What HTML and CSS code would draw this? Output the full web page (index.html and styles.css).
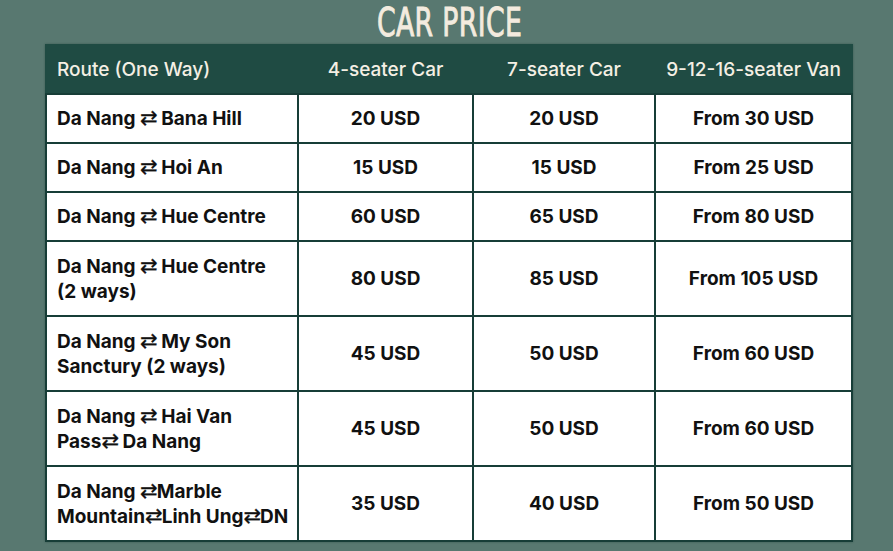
FILE: index.html
```html
<!DOCTYPE html>
<html>
<head>
<meta charset="utf-8">
<link rel="stylesheet" href="styles.css">
</head>
<body>
<div class="page">
  <h1 class="title"><span class="title-text">CAR PRICE</span></h1>
  <table class="prices">
    <colgroup>
      <col class="c1"><col class="c2"><col class="c3"><col class="c4">
    </colgroup>
    <thead>
      <tr>
        <th class="route">Route (One Way)</th>
        <th>4-seater Car</th>
        <th>7-seater Car</th>
        <th>9-12-16-seater Van</th>
      </tr>
    </thead>
    <tbody>
      <tr class="one">
        <td class="route">Da Nang <span class="arr">⇄</span> Bana Hill</td><td>20 USD</td><td>20 USD</td><td>From 30 USD</td>
      </tr>
      <tr class="one">
        <td class="route">Da Nang <span class="arr">⇄</span> Hoi An</td><td>15 USD</td><td>15 USD</td><td>From 25 USD</td>
      </tr>
      <tr class="one">
        <td class="route">Da Nang <span class="arr">⇄</span> Hue Centre</td><td>60 USD</td><td>65 USD</td><td>From 80 USD</td>
      </tr>
      <tr class="two">
        <td class="route">Da Nang <span class="arr">⇄</span> Hue Centre<br>(2 ways)</td><td>80 USD</td><td>85 USD</td><td>From 105 USD</td>
      </tr>
      <tr class="two">
        <td class="route">Da Nang <span class="arr">⇄</span> My Son<br>Sanctury (2 ways)</td><td>45 USD</td><td>50 USD</td><td>From 60 USD</td>
      </tr>
      <tr class="two">
        <td class="route">Da Nang <span class="arr">⇄</span> Hai Van<br>Pass<span class="arr">⇄</span> Da Nang</td><td>45 USD</td><td>50 USD</td><td>From 60 USD</td>
      </tr>
      <tr class="two">
        <td class="route">Da Nang <span class="arr">⇄</span>Marble<br>Mountain<span class="arr">⇄</span>Linh Ung<span class="arr">⇄</span>DN</td><td>35 USD</td><td>40 USD</td><td>From 50 USD</td>
      </tr>
    </tbody>
  </table>
</div>
</body>
</html>
```

FILE: styles.css
```css
html, body {
  margin: 0;
  padding: 0;
}
body {
  background: #587870;
  width: 893px;
  height: 551px;
  overflow: hidden;
  font-family: Inter, "Noto Sans", "DejaVu Sans", sans-serif;
}
.page {
  display: flex;
  flex-direction: column;
  align-items: flex-start;
}
.title {
  margin: 0;
  height: 44px;
  width: 893px;
  text-align: center;
  font-family: "Liberation Sans Narrow", "DejaVu Sans Condensed", sans-serif;
  font-weight: normal;
  font-size: 39px;
  line-height: 46px;
  color: #f3ebdf;
  -webkit-text-stroke: 0.9px #f3ebdf;
}
.title-text {
  display: inline-block;
  letter-spacing: 0.5px;
  transform: scaleX(0.76);
  margin-left: 6px;
}
.prices {
  margin-left: 45px;
  width: 806px;
  border-collapse: collapse;
  table-layout: fixed;
  box-shadow: 0 0 2px rgba(20, 50, 44, 0.4);
}
.c1 { width: 252px; }
.c2 { width: 175px; }
.c3 { width: 182px; }
.c4 { width: 197px; }
.prices th {
  background: #1f4b43;
  color: #f4efe4;
  font-weight: 500;
  font-size: 19px;
  height: 47px;
  padding: 0 8px;
  text-align: center;
  border: 2px solid #1f4b43;
  border-bottom-color: #173d37;
}
.prices td {
  background: #ffffff;
  color: #111111;
  font-weight: 700;
  font-size: 19px;
  line-height: 25px;
  text-align: center;
  padding: 0 8px;
  border: 2px solid #173d37;
}
.prices .route {
  text-align: left;
  padding-left: 10px;
}
.arr {
  font-family: "DejaVu Sans", sans-serif;
  font-weight: normal;
  font-size: 21px;
  line-height: 20px;
  letter-spacing: -1px;
  -webkit-text-stroke: 0.3px #111111;
}
.one td { height: 47px; }
.two td { height: 73px; }
```
